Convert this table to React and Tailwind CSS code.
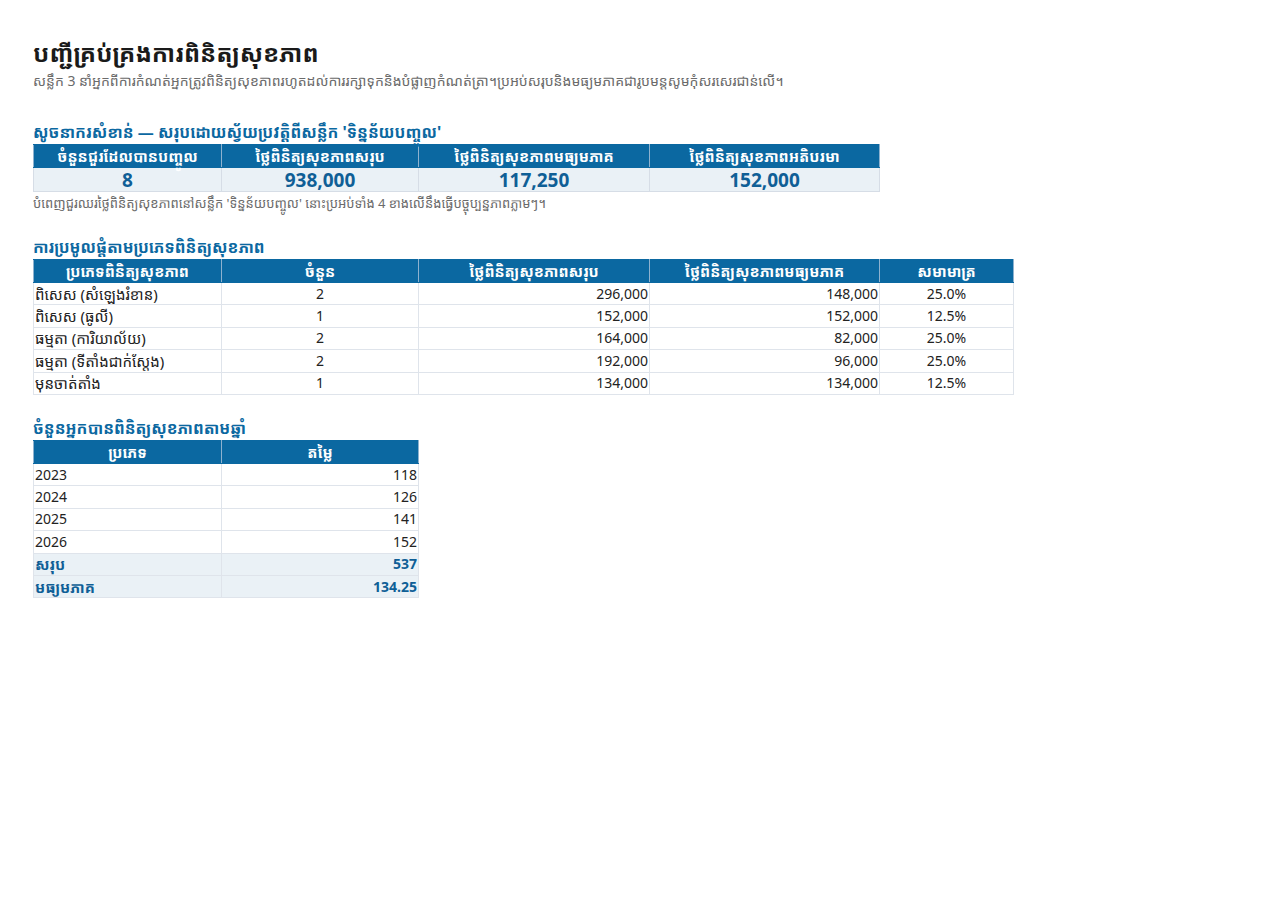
import React from "react";

const font = { fontFamily: '"Noto Sans", "Noto Sans Khmer", sans-serif' };

const W = { a: "w-[188px]", b: "w-[197px]", c: "w-[231px]", d: "w-[230px]", e: "w-[134px]" };

function Th({ children, w }) {
  return (
    <th className={`${w} h-[23px] bg-[#0b68a1] text-white font-bold text-[15px] leading-[20px] text-center border-x border-x-[#8eb2cf] border-y border-y-[#0b68a1] px-1 py-0 whitespace-nowrap`}>
      {children}
    </th>
  );
}

function Td({ children, align = "left", km = false, extra = "" }) {
  const a = align === "right" ? "text-right" : align === "center" ? "text-center" : "text-left";
  const size = km ? "text-[15px]" : "text-[14px]";
  return (
    <td className={`h-[22.4px] border border-[#dfe4eb] ${size} leading-[20px] px-[1px] py-0 whitespace-nowrap ${a} ${extra}`}>
      {children}
    </td>
  );
}

export default function App() {
  const breakdown = [
    ["ពិសេស (សំឡេងរំខាន)", "2", "296,000", "148,000", "25.0%"],
    ["ពិសេស (ធូលី)", "1", "152,000", "152,000", "12.5%"],
    ["ធម្មតា (ការិយាល័យ)", "2", "164,000", "82,000", "25.0%"],
    ["ធម្មតា (ទីតាំងជាក់ស្តែង)", "2", "192,000", "96,000", "25.0%"],
    ["មុនចាត់តាំង", "1", "134,000", "134,000", "12.5%"],
  ];
  const years = [
    ["2023", "118"],
    ["2024", "126"],
    ["2025", "141"],
    ["2026", "152"],
  ];
  return (
    <div className="min-h-[900px] bg-white pl-[33px] pt-[36px]" style={font}>
      <h1 className="text-[24px] font-bold leading-[34px] text-[#1a1a1a]">បញ្ជីគ្រប់គ្រងការពិនិត្យសុខភាព</h1>
      <p className="text-[14px] leading-[22px] text-[#6b6b6b]">
        សន្លឹក 3 នាំអ្នកពីការកំណត់អ្នកត្រូវពិនិត្យសុខភាពរហូតដល់ការរក្សាទុកនិងបំផ្លាញកំណត់ត្រា។ប្រអប់សរុបនិងមធ្យមភាគជារូបមន្តសូមកុំសរសេរជាន់លើ។
      </p>

      <h2 className="mt-[28px] text-[16px] font-bold leading-[24px] text-[#0b68a1]">
        សូចនាករសំខាន់ — សរុបដោយស្វ័យប្រវត្តិពីសន្លឹក 'ទិន្នន័យបញ្ចូល'
      </h2>
      <table className="border-collapse table-fixed">
        <thead>
          <tr>
            <Th w={W.a}>ចំនួនជួរដែលបានបញ្ចូល</Th>
            <Th w={W.b}>ថ្លៃពិនិត្យសុខភាពសរុប</Th>
            <Th w={W.c}>ថ្លៃពិនិត្យសុខភាពមធ្យមភាគ</Th>
            <Th w={W.d}>ថ្លៃពិនិត្យសុខភាពអតិបរមា</Th>
          </tr>
        </thead>
        <tbody>
          <tr>
            {["8", "938,000", "117,250", "152,000"].map((v, i) => (
              <td key={i} className="h-[24px] bg-[#eaf1f6] border border-[#d6dde6] text-center text-[19px] font-bold leading-[22px] text-[#0f5f96] py-0">
                {v}
              </td>
            ))}
          </tr>
        </tbody>
      </table>
      <p className="text-[13px] leading-[20px] text-[#6b6b6b] mt-[1px]">
        បំពេញជួរឈរថ្លៃពិនិត្យសុខភាពនៅសន្លឹក 'ទិន្នន័យបញ្ចូល' នោះប្រអប់ទាំង 4 ខាងលើនឹងធ្វើបច្ចុប្បន្នភាពភ្លាមៗ។
      </p>

      <h2 className="mt-[22px] text-[16px] font-bold leading-[24px] text-[#0b68a1]">ការប្រមូលផ្តុំតាមប្រភេទពិនិត្យសុខភាព</h2>
      <table className="border-collapse table-fixed">
        <thead>
          <tr>
            <Th w={W.a}>ប្រភេទពិនិត្យសុខភាព</Th>
            <Th w={W.b}>ចំនួន</Th>
            <Th w={W.c}>ថ្លៃពិនិត្យសុខភាពសរុប</Th>
            <Th w={W.d}>ថ្លៃពិនិត្យសុខភាពមធ្យមភាគ</Th>
            <Th w={W.e}>សមាមាត្រ</Th>
          </tr>
        </thead>
        <tbody>
          {breakdown.map((r, i) => (
            <tr key={i}>
              <Td km extra="text-[#222]">{r[0]}</Td>
              <Td align="center" extra="text-[#222]">{r[1]}</Td>
              <Td align="right" extra="text-[#222]">{r[2]}</Td>
              <Td align="right" extra="text-[#222]">{r[3]}</Td>
              <Td align="center" extra="text-[#222]">{r[4]}</Td>
            </tr>
          ))}
        </tbody>
      </table>

      <h2 className="mt-[21px] text-[16px] font-bold leading-[24px] text-[#0b68a1]">ចំនួនអ្នកបានពិនិត្យសុខភាពតាមឆ្នាំ</h2>
      <table className="border-collapse table-fixed">
        <thead>
          <tr>
            <Th w={W.a}>ប្រភេទ</Th>
            <Th w={W.b}>តម្លៃ</Th>
          </tr>
        </thead>
        <tbody>
          {years.map((r, i) => (
            <tr key={i}>
              <Td extra="text-[#222]">{r[0]}</Td>
              <Td align="right" extra="text-[#222]">{r[1]}</Td>
            </tr>
          ))}
          <tr>
            <Td km extra="bg-[#eaf1f6] font-bold text-[#0f5f96]">សរុប</Td>
            <Td align="right" extra="bg-[#eaf1f6] font-bold text-[#0f5f96]">537</Td>
          </tr>
          <tr>
            <Td km extra="bg-[#eaf1f6] font-bold text-[#0f5f96]">មធ្យមភាគ</Td>
            <Td align="right" extra="bg-[#eaf1f6] font-bold text-[#0f5f96]">134.25</Td>
          </tr>
        </tbody>
      </table>
    </div>
  );
}
